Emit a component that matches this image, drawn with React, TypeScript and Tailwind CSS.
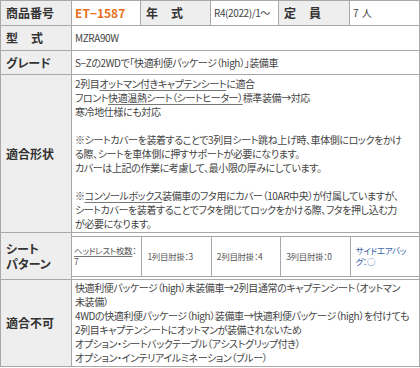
import React from "react";

const th =
  "bg-[#eeeeee] border border-[#a8a8a8] pl-[5px] pr-[2px] text-left font-bold text-[12px] leading-[14px] text-[#333] align-middle whitespace-nowrap";
const td =
  "bg-white border border-[#a8a8a8] px-[3px] text-[10px] tracking-[-0.4px] leading-[14px] text-[#444] align-middle whitespace-nowrap overflow-hidden";

// 2文字の見出しを均等割りで表示
function Spread({ a, b }: { a: string; b: string }) {
  return (
    <span className="inline-flex w-[37px] justify-between">
      <span>{a}</span>
      <span>{b}</span>
    </span>
  );
}

function Lines({ items }: { items: React.ReactNode[] }) {
  return (
    <div>
      {items.map((line, i) => (
        <div key={i} className="h-[14px]">
          {line}
        </div>
      ))}
    </div>
  );
}

const link = "underline decoration-[#777] underline-offset-[2px]";

const fitLines = [
  <>
    2列目<span className={link}>オットマン付きキャプテンシート</span>に適合
  </>,
  <>
    フロント<span className={link}>快適温熱シート（シートヒーター）</span>標準装備→対応
  </>,
  "寒冷地仕様にも対応",
  "",
  "※シートカバーを装着することで3列目シート跳ね上げ時、車体側にロックをかけ",
  "る際、シートを車体側に押すサポートが必要になります。",
  "カバーは上記の作業に考慮して、最小限の厚みにしています。",
  "",
  <>
    ※<span className={link}>コンソールボックス</span>装備車のフタ用にカバー（10AR中央）が付属していますが、
  </>,
  "シートカバーを装着することでフタを閉じてロックをかける際、フタを押し込む力",
  "が必要になります。",
];

const ngLines = [
  "快適利便パッケージ（high）未装備車→2列目通常のキャプテンシート（オットマン",
  "未装備）",
  "4WDの快適利便パッケージ（high）装備車→快適利便パッケージ（high）を付けても",
  "2列目キャプテンシートにオットマンが装備されないため",
  "オプション・シートバックテーブル（アシストグリップ付き）",
  "オプション・インテリアイルミネーション（ブルー）",
];

const seatCells: { text: React.ReactNode; blue?: boolean }[] = [
  {
    text: (
      <>
        <span className={link}>ヘッドレスト枚数</span>：<br />7
      </>
    ),
  },
  { text: "1列目肘掛：3" },
  { text: "2列目肘掛：4" },
  { text: "3列目肘掛：0" },
  {
    text: (
      <>
        サイドエアバッ
        <br />
        グ：○
      </>
    ),
    blue: true,
  },
];

export default function App() {
  return (
    <div className="w-[420px] h-[368px] overflow-hidden bg-white font-['Noto_Sans_CJK_JP',sans-serif] [font-feature-settings:'palt']">
      <table className="w-[419px] table-fixed border-collapse">
        <colgroup>
          <col className="w-[71px]" />
          <col className="w-[69px]" />
          <col className="w-[70px]" />
          <col className="w-[68px]" />
          <col className="w-[71px]" />
          <col className="w-[70px]" />
        </colgroup>
        <tbody>
          <tr className="h-[25px]">
            <th className={th}>商品番号</th>
            <td className={`${td} font-bold text-[12px] tracking-normal text-[#e5711c]`}>ET−1587</td>
            <th className={th}>
              <Spread a="年" b="式" />
            </th>
            <td className={td}>R4(2022)/1～</td>
            <th className={th}>
              <Spread a="定" b="員" />
            </th>
            <td className={td}>7&nbsp;&nbsp;人</td>
          </tr>
          <tr className="h-[25px]">
            <th className={th}>
              <Spread a="型" b="式" />
            </th>
            <td className={td} colSpan={5}>
              MZRA90W
            </td>
          </tr>
          <tr className="h-[24px]">
            <th className={th}>グレード</th>
            <td className={td} colSpan={5}>
              S−Zの2WDで「快適利便パッケージ（high）」装備車
            </td>
          </tr>
          <tr>
            <th className={th}>適合形状</th>
            <td className={`${td} pt-[2px] pb-[1px]`} colSpan={5}>
              <Lines items={fitLines} />
            </td>
          </tr>
          <tr className="h-[47px]">
            <th className={`${th} leading-[15px]`}>
              <div>シート</div>
              <div>パターン</div>
            </th>
            <td className="bg-white border border-[#a8a8a8] p-0 align-middle" colSpan={5}>
              <div className="grid grid-cols-5 border-y border-[#a8a8a8] h-[41px]">
                {seatCells.map((c, i) => (
                  <div
                    key={i}
                    className={`flex items-center overflow-hidden text-[8.5px] tracking-[-0.3px] leading-[11px] whitespace-nowrap ${
                      i === 0 ? "pl-[2px]" : "pl-[5px] border-l border-[#a8a8a8]"
                    } ${c.blue ? "text-[#3a63a8]" : "text-[#555]"}`}
                  >
                    <div>{c.text}</div>
                  </div>
                ))}
              </div>
            </td>
          </tr>
          <tr>
            <th className={th}>適合不可</th>
            <td className={`${td} py-[1px]`} colSpan={5}>
              <Lines items={ngLines} />
            </td>
          </tr>
        </tbody>
      </table>
    </div>
  );
}
